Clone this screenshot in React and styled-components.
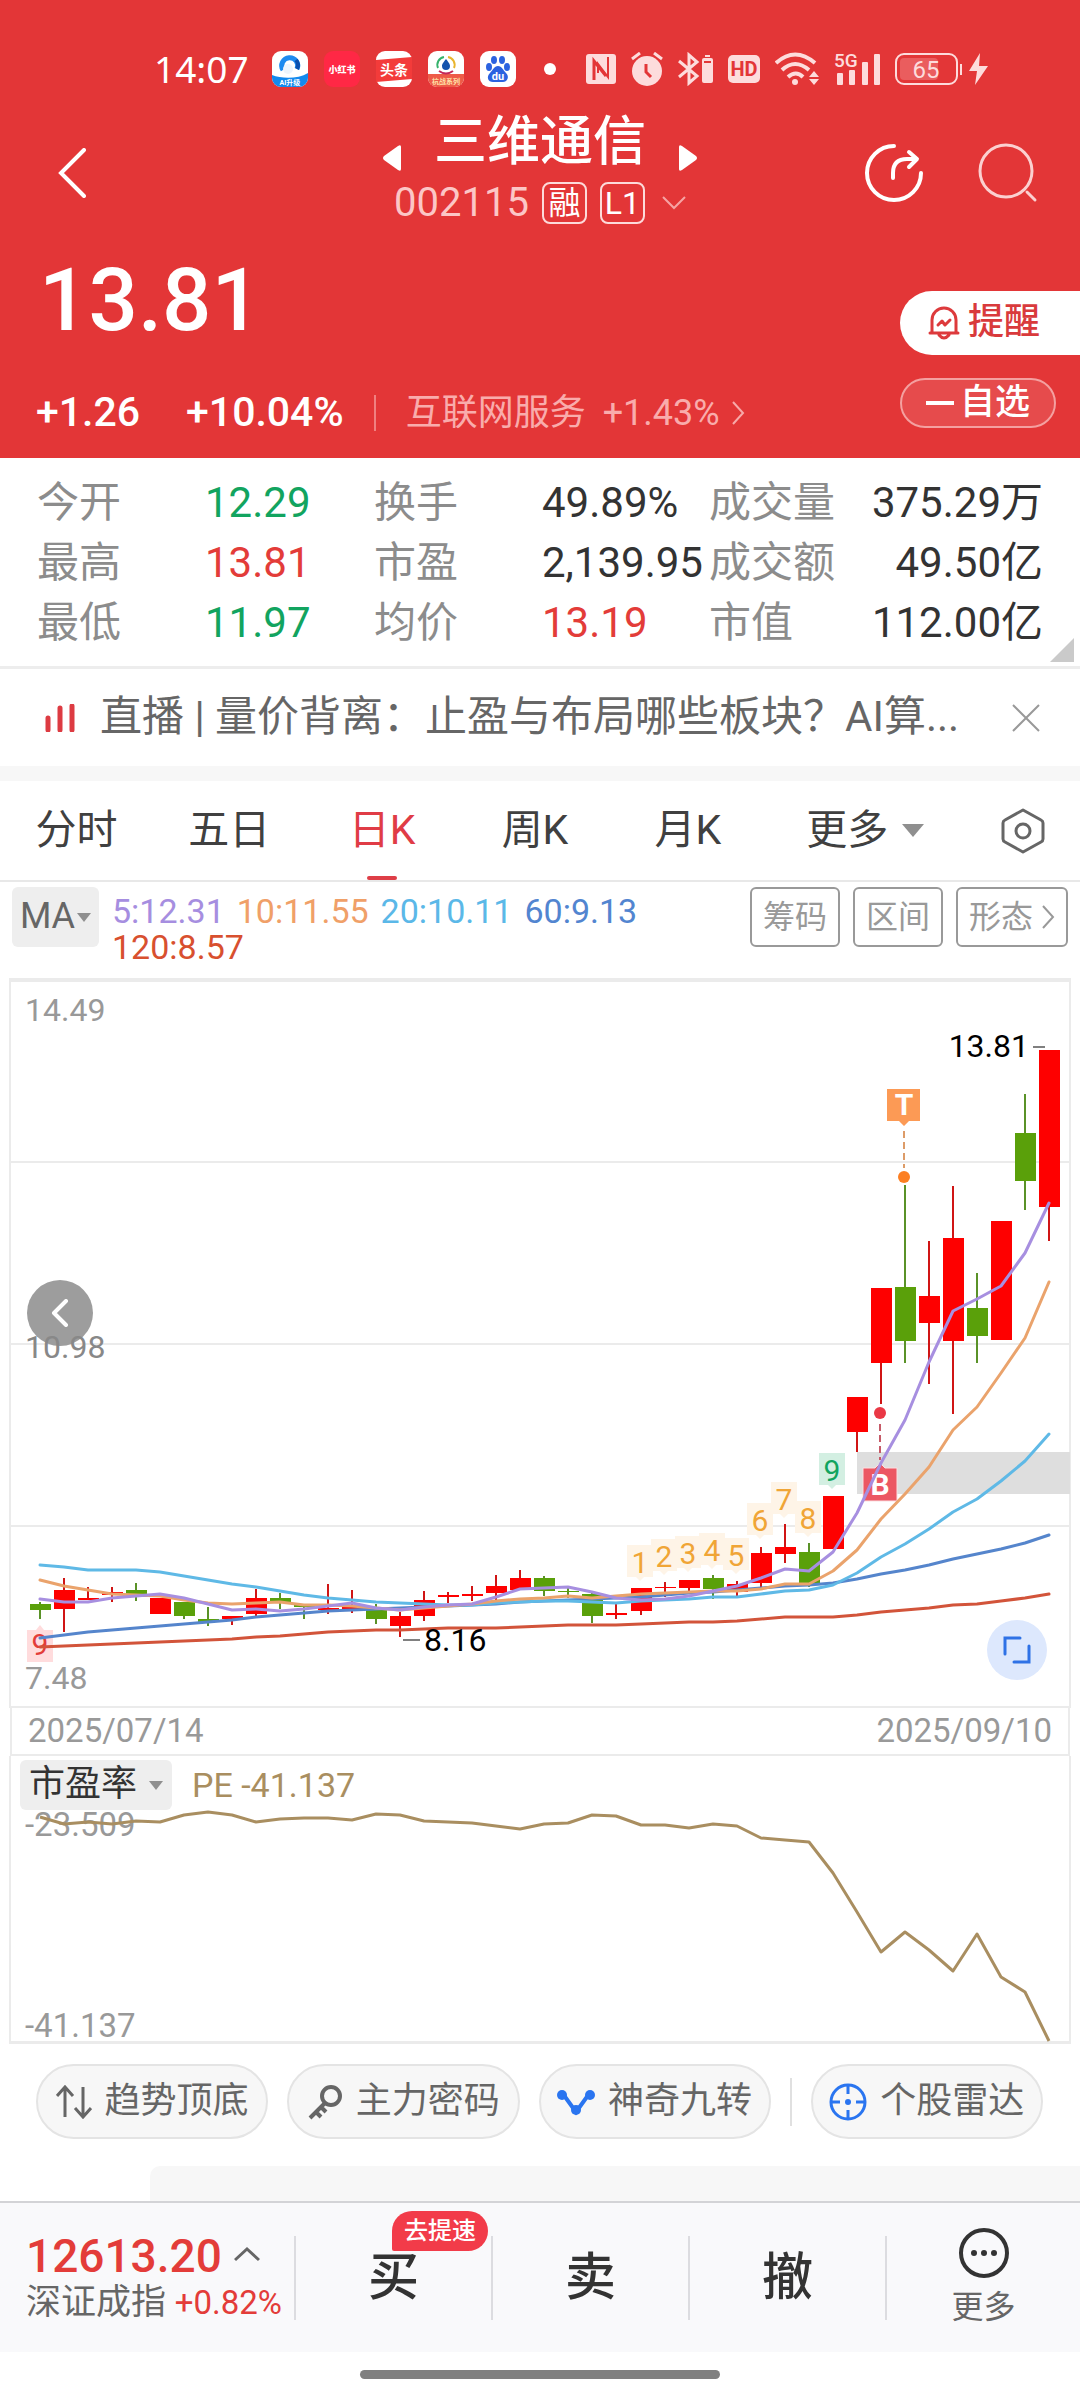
import styled, { createGlobalStyle } from 'styled-components';

const RED = '#e33637';
const UP = '#e33c39';
const DOWN = '#12a45f';

const stats = [
  { label: '今开', value: '12.29', color: DOWN },
  { label: '换手', value: '49.89%' },
  { label: '成交量', value: '375.29万', end: true },
  { label: '最高', value: '13.81', color: UP },
  { label: '市盈', value: '2,139.95' },
  { label: '成交额', value: '49.50亿', end: true },
  { label: '最低', value: '11.97', color: DOWN },
  { label: '均价', value: '13.19', color: UP },
  { label: '市值', value: '112.00亿', end: true },
];

const periods = ['分时', '五日', '日K', '周K', '月K'];

const averages = [
  { text: '5:12.31', color: '#a68ee0' },
  { text: '10:11.55', color: '#f0a068' },
  { text: '20:10.11', color: '#5bb8e8' },
  { text: '60:9.13', color: '#5285d0' },
  { text: '120:8.57', color: '#d8502f' },
];

// [up, high, body top, body bottom, low] in chart units
const candles = [
  [0, 1602, 1604, 1610, 1619], [1, 1578, 1590, 1609, 1632], [1, 1587, 1598, 1600, 1600],
  [1, 1587, 1592, 1595, 1602], [0, 1583, 1590, 1597, 1601], [1, 1598, 1598, 1614, 1614],
  [0, 1602, 1602, 1616, 1619], [0, 1607, 1619, 1622, 1626], [1, 1616, 1616, 1619, 1625],
  [1, 1589, 1598, 1614, 1617], [0, 1593, 1598, 1602, 1609], [0, 1605, 1605, 1607, 1619],
  [1, 1584, 1608, 1610, 1614], [1, 1590, 1607, 1609, 1613], [0, 1604, 1610, 1619, 1624],
  [1, 1612, 1616, 1626, 1637], [1, 1591, 1600, 1616, 1621], [1, 1592, 1595, 1597, 1603],
  [1, 1586, 1594, 1596, 1601], [1, 1575, 1586, 1593, 1600], [1, 1570, 1578, 1590, 1590],
  [0, 1576, 1578, 1591, 1596], [0, 1587, 1591, 1592, 1598], [0, 1593, 1594, 1616, 1623],
  [1, 1604, 1613, 1615, 1619], [1, 1588, 1588, 1611, 1615], [1, 1582, 1587, 1588, 1597],
  [1, 1580, 1580, 1588, 1591], [0, 1575, 1578, 1589, 1599], [1, 1581, 1584, 1592, 1598],
  [1, 1547, 1553, 1583, 1590], [1, 1524, 1547, 1554, 1563], [0, 1543, 1552, 1585, 1587],
  [1, 1496, 1496, 1549, 1549], [1, 1397, 1397, 1432, 1452], [1, 1288, 1288, 1363, 1404],
  [0, 1185, 1287, 1341, 1363], [1, 1241, 1296, 1323, 1384], [1, 1186, 1238, 1341, 1414],
  [0, 1273, 1308, 1336, 1363], [1, 1221, 1221, 1340, 1340], [0, 1094, 1133, 1181, 1210],
  [1, 1050, 1050, 1207, 1241],
];

const ma5 = [1599, 1602, 1602, 1598, 1596, 1594, 1598, 1604, 1610, 1609, 1611, 1609, 1606, 1603, 1608, 1610, 1607, 1605, 1604, 1597, 1589, 1588, 1587, 1592, 1598, 1600, 1599, 1596, 1591, 1586, 1578, 1569, 1571, 1552, 1513, 1463, 1420, 1362, 1311, 1299, 1286, 1253, 1203];
const ma10 = [1580, 1586, 1590, 1594, 1595, 1596, 1600, 1603, 1604, 1603, 1602, 1605, 1605, 1606, 1608, 1610, 1608, 1606, 1604, 1601, 1599, 1598, 1596, 1598, 1596, 1594, 1593, 1592, 1591, 1591, 1589, 1584, 1584, 1571, 1550, 1519, 1494, 1467, 1430, 1407, 1373, 1338, 1282];
const ma20 = [1565, 1567, 1570, 1570, 1570, 1572, 1576, 1580, 1584, 1587, 1591, 1595, 1598, 1600, 1602, 1603, 1604, 1605, 1605, 1603, 1602, 1601, 1601, 1602, 1603, 1601, 1600, 1599, 1597, 1597, 1594, 1591, 1590, 1585, 1573, 1557, 1544, 1529, 1512, 1499, 1481, 1461, 1434];
const ma60 = [1638, 1635, 1632, 1630, 1628, 1626, 1624, 1622, 1620, 1617, 1615, 1613, 1611, 1610, 1609, 1608, 1607, 1606, 1605, 1604, 1602, 1601, 1600, 1599, 1598, 1597, 1595, 1593, 1592, 1590, 1588, 1586, 1585, 1583, 1579, 1574, 1570, 1565, 1559, 1554, 1549, 1543, 1535];
const ma120 = [1647, 1646, 1645, 1644, 1643, 1642, 1641, 1640, 1639, 1637, 1636, 1634, 1632, 1631, 1630, 1630, 1629, 1628, 1628, 1628, 1627, 1626, 1625, 1625, 1625, 1624, 1623, 1622, 1622, 1621, 1619, 1617, 1617, 1617, 1615, 1612, 1610, 1608, 1605, 1604, 1601, 1598, 1594];
const pe = [1817, 1824, 1822, 1824, 1821, 1822, 1815, 1812, 1815, 1822, 1819, 1818, 1818, 1820, 1814, 1815, 1821, 1822, 1823, 1826, 1829, 1824, 1823, 1815, 1816, 1825, 1825, 1828, 1824, 1826, 1838, 1840, 1842, 1873, 1912, 1952, 1932, 1950, 1971, 1934, 1977, 1992, 2041];

const nineTurns = [
  { n: 1, i: 25, y: 1545 }, { n: 2, i: 26, y: 1539 }, { n: 3, i: 27, y: 1536 },
  { n: 4, i: 28, y: 1533 }, { n: 5, i: 29, y: 1538 }, { n: 6, i: 30, y: 1503 },
  { n: 7, i: 31, y: 1482 }, { n: 8, i: 32, y: 1501 }, { n: 9, i: 33, y: 1453 },
];

const xAt = (i) => Math.round(40 + i * 24.02);
const toPoints = (list) => list.map((y, i) => `${xAt(i)},${y}`).join(' ');

function AppIcons() {
  return (
    <>
      <Svg width="36" height="36" viewBox="0 0 36 36">
        <rect width="36" height="36" rx="9" fill="#fff" />
        <path d="M0 24C10 28 26 28 36 22V27a9 9 0 0 1-9 9H9a9 9 0 0 1-9-9z" fill="#1389ee" />
        <path d="M11 19a8 8 0 1 1 14-1" fill="none" stroke="#1d8af0" strokeWidth="5" />
        <path d="M24 9a8 8 0 0 1 1 9" fill="none" stroke="#0b4fae" strokeWidth="4" />
        <circle cx="16" cy="18" r="5" fill="#eef5fd" />
        <SvgText x="18" y="34" size="7" anchor="middle" fill="#fff" weight="700">AI升级</SvgText>
      </Svg>
      <Svg width="36" height="36" viewBox="0 0 36 36">
        <rect width="36" height="36" rx="9" fill="#ff2845" />
        <SvgText x="18" y="22" size="9" anchor="middle" fill="#fff" weight="900">小红书</SvgText>
      </Svg>
      <Svg width="36" height="36" viewBox="0 0 36 36">
        <rect width="36" height="36" rx="9" fill="#fff" />
        <path d="M0 9l36-3v22l-36 3z" fill="#f33b3a" />
        <SvgText x="18" y="24" size="14" anchor="middle" fill="#fff" weight="700">头条</SvgText>
      </Svg>
      <Svg width="36" height="36" viewBox="0 0 36 36">
        <rect width="36" height="36" rx="9" fill="#fff" />
        <path d="M0 23h36v4a9 9 0 0 1-9 9H9a9 9 0 0 1-9-9z" fill="#ee5b48" />
        <path d="M10 17a8 8 0 0 1 6-11" stroke="#35b26b" strokeWidth="2" fill="none" />
        <path d="M20 6a8 8 0 0 1 6 11" stroke="#e9b52e" strokeWidth="2" fill="none" />
        <path d="M11 20q7 5 14 0" stroke="#c3285a" strokeWidth="2" fill="none" />
        <path d="M18 8c3 4 4 5 4 7a4 4 0 0 1-8 0c0-2 1-3 4-7z" fill="#1453ad" />
        <SvgText x="18" y="33" size="7" anchor="middle" fill="#ffe2a8" weight="700">杭战系列</SvgText>
      </Svg>
      <Svg width="36" height="36" viewBox="0 0 36 36">
        <rect width="36" height="36" rx="9" fill="#fff" />
        <g fill="#2b62e0">
          <ellipse cx="9" cy="16" rx="3" ry="4" />
          <ellipse cx="14" cy="9" rx="3" ry="4" />
          <ellipse cx="22" cy="9" rx="3" ry="4" />
          <ellipse cx="27" cy="16" rx="3" ry="4" />
          <path d="M18 15c4 0 5 4 8 7 4 4 1 9-3 9H13c-5 0-7-5-3-9 3-3 4-7 8-7z" />
        </g>
        <SvgText x="18" y="29" size="11" anchor="middle" fill="#fff" weight="700">du</SvgText>
      </Svg>
    </>
  );
}

function SystemIcons() {
  const tint = '#fddcdc';
  return (
    <SystemTray>
      <Svg width="30" height="32" viewBox="0 0 30 32">
        <rect y="1" width="30" height="30" rx="3" fill={tint} />
        <path d="M8 27V8l12 15" fill="none" stroke={RED} strokeWidth="3" />
        <path d="M22 4v20L12 11v9" fill="none" stroke={RED} strokeWidth="2" />
      </Svg>
      <Svg width="32" height="34" viewBox="0 0 32 34">
        <circle cx="16" cy="19" r="15" fill={tint} />
        <path d="M1 7l8-6M31 7l-8-6" stroke={tint} strokeWidth="3" />
        <path d="M15 12v8l5 5" fill="none" stroke={RED} strokeWidth="3" />
      </Svg>
      <Svg width="35" height="34" viewBox="0 0 35 34">
        <path d="M1 9l18 15-8 7V3l8 7L1 25" fill="none" stroke={tint} strokeWidth="3" />
        <rect x="24" y="6" width="11" height="25" rx="2" fill={tint} />
        <rect x="27" y="3" width="5" height="2" fill={tint} />
        <path d="M26 10h7" stroke={RED} strokeWidth="2" />
      </Svg>
      <Svg width="32" height="30" viewBox="0 0 32 30">
        <rect width="32" height="28" y="1" rx="5" fill={tint} />
        <SvgText x="16" y="22" size="20" anchor="middle" fill={RED} weight="700">HD</SvgText>
      </Svg>
      <Svg width="44" height="34" viewBox="0 0 44 34">
        <g fill="none" stroke={tint} strokeWidth="4">
          <path d="M1 11Q20-6 40 11" />
          <path d="M7 18Q20 6 34 18" />
          <path d="M13 25q8-7 15 0" />
        </g>
        <circle cx="20" cy="30" r="3" fill={tint} />
        <path d="M34 25l5-6 5 6zM34 27h10l-5 6z" fill={tint} />
      </Svg>
      <Svg width="46" height="46" viewBox="0 -6 46 46">
        <g fill={tint}>
          <rect x="3" y="21" width="6" height="12" rx="1" />
          <rect x="15" y="18" width="6" height="15" rx="1" />
          <rect x="28" y="10" width="6" height="23" rx="1" />
          <rect x="40" y="2" width="6" height="31" rx="1" />
        </g>
        <SvgText x="0" y="15" size="19" fill={tint} weight="500">5G</SvgText>
      </Svg>
      <Svg width="94" height="34" viewBox="0 0 94 34">
        <rect x="1" y="2" width="61" height="30" rx="8" fill="none" stroke={tint} strokeWidth="2" />
        <rect x="5" y="6" width="38" height="22" rx="4" fill="#ea5d5e" />
        <rect x="65" y="12" width="2" height="11" fill={tint} />
        <path d="M85 1L74 19h8l-2 14 13-19h-9z" fill={tint} />
        <SvgText x="31" y="26" size="24" anchor="middle" fill={tint}>65</SvgText>
      </Svg>
    </SystemTray>
  );
}

function KLineChart() {
  return (
    <ChartBox>
      <ChartSvg viewBox="0 978 1080 730">
        <path d="M10 980H1070" stroke="#ebebeb" strokeWidth="4" />
        <path d="M10 1162H1070M10 1344H1070M10 1526H1070M10 1707H1070" stroke="#ebebeb" strokeWidth="2" />
        <path d="M10 978V1708M1070 978V1708" stroke="#ebebeb" strokeWidth="2" />
        <rect x="857" y="1452" width="213" height="42" fill="#dedede" />
        <circle cx="60" cy="1313" r="33" fill="#9d9d9d" />
        <g fill="#999">
          <SvgText x="25" y="1021" size="32">14.49</SvgText>
          <SvgText x="25" y="1358" size="32" fill="#888">10.98</SvgText>
          <SvgText x="25" y="1689" size="32">7.48</SvgText>
        </g>
        {candles.map(([up, high, top, bottom, low], i) => (
          <g key={i} fill={up ? '#fe0000' : '#5aa00a'}>
            <rect x={xAt(i) - 1} y={high} width="2" height={low - high} fill={up ? '#d01515' : '#5a9228'} />
            <rect x={xAt(i) - 10} y={top} width="21" height={bottom - top} />
          </g>
        ))}
        {nineTurns.map(({ n, i, y }) => (
          <g key={n}>
            <path
              d={`M${xAt(i) - 14} ${y}h26v32h-9l-4 4-4-4h-9z`}
              fill={n === 9 ? '#d3efe2' : '#fef4e7'}
            />
            <SvgText x={xAt(i) - 1} y={y + 28} size="30" anchor="middle" fill={n === 9 ? DOWN : '#f0a536'}>{n}</SvgText>
          </g>
        ))}
        <path d="M27 1630h9l4-5 4 5h9v32H27z" fill="#ffdcdd" />
        <SvgText x="40" y="1655" size="30" anchor="middle" fill={UP}>9</SvgText>

        <path d="M904 1131V1168" stroke="#dd9c68" strokeWidth="2" strokeDasharray="7 4" />
        <circle cx="904" cy="1177" r="6" fill="#fc7f22" />
        <path d="M887 1089h33v32h-11l-5 5-5-5h-12z" fill="#fc9a55" />
        <SvgText x="904" y="1115" size="30" anchor="middle" fill="#fff" weight="700">T</SvgText>
        <path d="M880 1424V1460" stroke="#c65a68" strokeWidth="2" strokeDasharray="7 4" />
        <circle cx="880" cy="1413" r="6" fill="#ea3845" />
        <path d="M863 1468h12l5-5 5 5h12v33h-34z" fill="#ec5763" stroke="#fbe0e2" strokeWidth="1" />
        <SvgText x="880" y="1495" size="30" anchor="middle" fill="#fff" weight="700">B</SvgText>

        <g fill="none" strokeWidth="3" strokeLinejoin="round" strokeLinecap="round">
          <polyline points={toPoints(ma120)} stroke="#d2543a" />
          <polyline points={toPoints(ma60)} stroke="#5585cc" />
          <polyline points={toPoints(ma20)} stroke="#5fb9e6" />
          <polyline points={toPoints(ma10)} stroke="#eaa36c" />
          <polyline points={toPoints(ma5)} stroke="#a78fe0" />
        </g>
        <path d="M403 1640h17M1033 1047h12" stroke="#808080" strokeWidth="2" />
        <SvgText x="424" y="1651" size="32" fill="#000">8.16</SvgText>
        <SvgText x="1029" y="1057" size="32" anchor="end" fill="#000">13.81</SvgText>
      </ChartSvg>
      <PrevButton aria-label="prev">
        <Svg width="20" height="28" viewBox="0 0 20 28">
          <path d="M16 2L4 14l12 12" fill="none" stroke="#fff" strokeWidth="4" strokeLinecap="round" strokeLinejoin="round" />
        </Svg>
      </PrevButton>
      <ExpandButton aria-label="expand">
        <Svg width="28" height="28" viewBox="0 0 28 28">
          <path d="M17 2H2v16M26 10v16H11" fill="none" stroke="#2f72e6" strokeWidth="3" strokeLinecap="round" />
        </Svg>
      </ExpandButton>
    </ChartBox>
  );
}

function App() {
  return (
    <Page>
      <GlobalStyle />
      <Header>
        <StatusBar>
          <Clock>14:07</Clock>
          <AppTray><AppIcons /></AppTray>
          <Dot />
          <SystemIcons />
        </StatusBar>
        <NavBar>
          <IconButton aria-label="back">
            <Svg width="44" height="50" viewBox="-14 0 44 50">
              <path d="M28 2L5 25l23 23" fill="none" stroke="#fff" strokeWidth="4" strokeLinecap="round" />
            </Svg>
          </IconButton>
          <TitleBlock>
            <TitleRow>
              <IconButton aria-label="previous stock">
                <Svg width="18" height="28" viewBox="0 0 18 28"><path d="M18 3v22q0 3-3 1L1 16q-2-2 0-4L15 2q3-2 3 1z" fill="#fff" /></Svg>
              </IconButton>
              <Title>三维通信</Title>
              <IconButton aria-label="next stock">
                <Svg width="18" height="28" viewBox="0 0 18 28"><path d="M0 3v22q0 3 3 1l14-10q2-2 0-4L3 2Q0 0 0 3z" fill="#fff" /></Svg>
              </IconButton>
            </TitleRow>
            <CodeRow>
              <Code>002115</Code>
              <Tag>融</Tag>
              <Tag>L1</Tag>
              <Svg width="28" height="14" viewBox="-4 0 28 14">
                <path d="M1 1l11 11L23 1" fill="none" stroke="#f6a3a3" strokeWidth="2" />
              </Svg>
            </CodeRow>
          </TitleBlock>
          <NavActions>
            <IconButton aria-label="share">
              <Svg width="60" height="60" viewBox="0 0 60 60">
                <g fill="none" stroke="#fff" strokeWidth="4" strokeLinecap="round" strokeLinejoin="round">
                  <path d="M30 3A27 27 0 1 0 57 30" />
                  <path d="M29 35v-5q0-14 14-14h9M45 9l8 7-8 8" />
                </g>
              </Svg>
            </IconButton>
            <IconButton aria-label="search">
              <Svg width="60" height="60" viewBox="0 0 60 60">
                <g fill="none" stroke="#fbd0d0" strokeWidth="3" strokeLinecap="round">
                  <circle cx="28" cy="28" r="26" />
                  <path d="M49 49l8 8" />
                </g>
              </Svg>
            </IconButton>
          </NavActions>
        </NavBar>
        <Quote>
          <div>
            <Price>13.81</Price>
            <ChangeRow>
              <Change>+1.26</Change>
              <Change>+10.04%</Change>
              <Sector href="#sector">
                互联网服务 <span>+1.43%</span>
                <Svg width="14" height="24" viewBox="0 0 14 24">
                  <path d="M2 1l10 11L2 23" fill="none" stroke="#f7a9a9" strokeWidth="2" />
                </Svg>
              </Sector>
            </ChangeRow>
          </div>
          <QuoteActions>
            <RemindButton>
              <Svg width="32" height="34" viewBox="0 0 32 34">
                <g fill="none" stroke="#dd3a3c" strokeWidth="3" strokeLinejoin="round" strokeLinecap="round">
                  <path d="M4 26V14a12 12 0 0 1 24 0v12M2 27h28M11 29q5 6 10 0" />
                  <path d="M10 19l4-4 3 4 5-5" />
                </g>
              </Svg>
              提醒
            </RemindButton>
            <WatchButton>
              <Svg width="28" height="4" viewBox="0 0 28 4"><rect width="28" height="4" fill="#fff" /></Svg>
              自选
            </WatchButton>
          </QuoteActions>
        </Quote>
      </Header>

      <Stats>
        {stats.map((item) => (
          <Stat key={item.label}>
            <StatLabel $end={item.end}>{item.label}</StatLabel>
            <StatValue $color={item.color} $end={item.end}>{item.value}</StatValue>
          </Stat>
        ))}
        <Corner />
      </Stats>

      <Banner>
        <Svg width="30" height="28" viewBox="0 0 30 28">
          <path d="M3 14v12M15 4v22M27 2v24" stroke="#dd3b42" strokeWidth="5" strokeLinecap="round" />
        </Svg>
        <BannerText href="#live">直播 | 量价背离：止盈与布局哪些板块？AI算...</BannerText>
        <IconButton aria-label="close">
          <Svg width="28" height="28" viewBox="0 0 28 28">
            <path d="M1 1l26 26M27 1L1 27" stroke="#999" strokeWidth="2" />
          </Svg>
        </IconButton>
      </Banner>

      <Tabs>
        {periods.map((name) => (
          <Tab key={name} $active={name === '日K'}>{name}</Tab>
        ))}
        <Tab>更多<Caret $size={11} /></Tab>
        <Tab aria-label="settings">
          <Svg width="44" height="46" viewBox="0 0 44 46">
            <g fill="none" stroke="#666" strokeWidth="3" strokeLinejoin="round">
              <path d="M22 2l18 10q2 1 2 3v16q0 2-2 3L22 44 4 34q-2-1-2-3V15q0-2 2-3z" />
              <circle cx="22" cy="23" r="7" />
            </g>
          </Svg>
        </Tab>
      </Tabs>

      <MaRow>
        <MaButton>MA<Caret $size={7} /></MaButton>
        <MaList>
          {averages.map((ma) => (
            <MaItem key={ma.text} $color={ma.color}>{ma.text}</MaItem>
          ))}
        </MaList>
        <OutlineButton>筹码</OutlineButton>
        <OutlineButton>区间</OutlineButton>
        <OutlineButton>
          形态
          <Svg width="14" height="24" viewBox="0 0 14 24">
            <path d="M2 1l10 11L2 23" fill="none" stroke="#999" strokeWidth="2" />
          </Svg>
        </OutlineButton>
      </MaRow>

      <KLineChart />
      <DateRow><span>2025/07/14</span><span>2025/09/10</span></DateRow>
      <PePanel>
        <PeHead>
          <PeButton>市盈率<Caret $size={7} /></PeButton>
          <span>PE -41.137</span>
        </PeHead>
        <ChartSvg viewBox="0 1756 1080 288">
          <path d="M10 1756V2044M1070 1756V2044" stroke="#ebebeb" strokeWidth="2" />
          <path d="M10 2043H1070" stroke="#ebebeb" strokeWidth="4" />
          <SvgText x="25" y="1836" size="33" fill="#999">-23.509</SvgText>
          <SvgText x="25" y="2037" size="33" fill="#999">-41.137</SvgText>
          <polyline points={toPoints(pe)} fill="none" stroke="#a98e60" strokeWidth="3" strokeLinejoin="round" />
        </ChartSvg>
      </PePanel>

      <Tools>
        <Pill>
          <Svg width="36" height="36" viewBox="0 0 36 36">
            <path d="M9 33V4M1 12l8-9 8 9M27 3v29M19 24l8 9 8-9" fill="none" stroke="#666" strokeWidth="3" />
          </Svg>
          趋势顶底
        </Pill>
        <Pill>
          <Svg width="36" height="36" viewBox="0 0 36 36">
            <g fill="none" stroke="#666" strokeWidth="4">
              <circle cx="24" cy="12" r="9" />
              <path d="M18 19L3 34M9 28l5 5M14 23l5 5" />
            </g>
          </Svg>
          主力密码
        </Pill>
        <Pill>
          <Svg width="38" height="36" viewBox="0 0 38 36">
            <path d="M6 10l13 18L32 10" fill="none" stroke="#2a75f0" strokeWidth="4" />
            <g fill="#2a75f0"><circle cx="5" cy="11" r="5" /><circle cx="33" cy="11" r="5" /><circle cx="19" cy="26" r="5" /></g>
          </Svg>
          神奇九转
        </Pill>
        <ToolDivider />
        <Pill>
          <Svg width="38" height="38" viewBox="0 0 38 38">
            <g fill="none" stroke="#2a75f0" strokeWidth="3">
              <circle cx="19" cy="19" r="17" />
              <path d="M19 2v9M19 27v9M2 19h9M27 19h9" />
            </g>
            <circle cx="19" cy="19" r="3" fill="#2a75f0" />
          </Svg>
          个股雷达
        </Pill>
      </Tools>
      <NextCard />

      <TradeBar>
        <IndexButton>
          <IndexValue>
            12613.20
            <Svg width="26" height="24" viewBox="0 0 26 24">
              <path d="M1 16L13 5l12 11" fill="none" stroke="#666" strokeWidth="3" />
            </Svg>
          </IndexValue>
          <IndexName>深证成指 <b>+0.82%</b></IndexName>
        </IndexButton>
        <TradeButton>买<Badge>去提速</Badge></TradeButton>
        <TradeButton>卖</TradeButton>
        <TradeButton>撤</TradeButton>
        <MoreButton>
          <Svg width="52" height="52" viewBox="0 0 52 52">
            <circle cx="26" cy="26" r="23" fill="none" stroke="#333" strokeWidth="4" />
            <g fill="#333"><circle cx="16" cy="26" r="3" /><circle cx="26" cy="26" r="3" /><circle cx="36" cy="26" r="3" /></g>
          </Svg>
          更多
        </MoreButton>
      </TradeBar>
      <HomeArea><HomeBar /></HomeArea>
    </Page>
  );
}

export default App;

const GlobalStyle = createGlobalStyle`
  * { box-sizing: border-box; }
  body {
    margin: 0;
    background: #fff;
  }
  button {
    font: inherit;
    color: inherit;
    background: none;
    border: 0;
    padding: 0;
    margin: 0;
    cursor: pointer;
  }
  a { color: inherit; text-decoration: none; }
  h1, p, dl, dt, dd { margin: 0; font-weight: inherit; }
`;
const Page = styled.div`
  font-family: Roboto, 'Noto Sans CJK SC', sans-serif;
  line-height: 1.2;
  color: #333;
  white-space: nowrap;
`;
const Svg = styled.svg`
  display: block;
  flex: none;
`;
const SvgText = styled.text`
  font-size: ${(p) => p.size}px;
  font-weight: ${(p) => p.weight || 400};
  text-anchor: ${(p) => p.anchor || 'start'};
`;
const Header = styled.header`
  background: ${RED};
  color: #fff;
`;
const StatusBar = styled.div`
  display: flex;
  align-items: center;
  height: 112px;
  padding: 26px 0 0 154px;
`;
const Clock = styled.span`
  font-family: 'Noto Sans', sans-serif;
  font-size: 37px;
  width: 118px;
`;
const AppTray = styled.div`
  display: flex;
  gap: 16px;
`;
const Dot = styled.i`
  width: 12px;
  height: 12px;
  border-radius: 50%;
  background: #fff;
  margin: 0 30px 0 28px;
`;
const SystemTray = styled.div`
  display: flex;
  align-items: center;
  gap: 15px;
`;
const NavBar = styled.nav`
  display: grid;
  grid-template-columns: 1fr auto 1fr;
  align-items: center;
  height: 122px;
  padding: 0 42px;
`;
const IconButton = styled.button`
  display: flex;
  align-items: center;
  justify-self: start;
`;
const TitleBlock = styled.div`
  align-self: start;
  display: flex;
  flex-direction: column;
  align-items: center;
  gap: 10px;
`;
const TitleRow = styled.div`
  display: flex;
  align-items: flex-end;
  gap: 33px;
`;
const Title = styled.h1`
  font-size: 53px;
  line-height: 60px;
  font-weight: 500;
`;
const CodeRow = styled.div`
  display: flex;
  align-items: center;
  gap: 13px;
  color: #ffdada;
`;
const Code = styled.span`
  font-size: 40px;
  line-height: 42px;
  color: #fcc6c6;
`;
const Tag = styled.span`
  width: 45px;
  height: 42px;
  border: 2px solid #fddada;
  border-radius: 8px;
  font-size: 32px;
  line-height: 38px;
  text-align: center;
  color: #fff;
`;
const NavActions = styled.div`
  justify-self: end;
  display: flex;
  gap: 54px;
`;
const Quote = styled.section`
  display: flex;
  justify-content: space-between;
  height: 224px;
`;
const Price = styled.p`
  padding-left: 39px;
  margin-top: 16px;
  font-size: 87px;
  line-height: 100px;
  font-weight: 500;
`;
const ChangeRow = styled.div`
  display: flex;
  align-items: center;
  gap: 46px;
  height: 50px;
  margin-top: 38px;
  padding-left: 36px;
`;
const Change = styled.span`
  font-size: 41px;
  font-weight: 500;
`;
const Sector = styled.a`
  display: flex;
  align-items: center;
  gap: 11px;
  margin-left: -16px;
  padding-left: 30px;
  font-size: 36px;
  line-height: 36px;
  color: #f9acac;
  border-left: 2px solid #f08080;
  span { margin-left: 6px; }
`;
const QuoteActions = styled.div`
  display: flex;
  flex-direction: column;
  gap: 23px;
  padding-top: 57px;
`;
const RemindButton = styled.button`
  display: flex;
  align-items: center;
  gap: 8px;
  width: 180px;
  height: 64px;
  padding-left: 28px;
  border-radius: 32px 0 0 32px;
  background: #fff;
  color: #d93a3c;
  font-size: 36px;
  font-weight: 500;
`;
const WatchButton = styled.button`
  display: flex;
  align-items: center;
  justify-content: center;
  gap: 6px;
  width: 156px;
  height: 50px;
  border: 2px solid #f4a0a0;
  border-radius: 25px;
  background: #e64b4c;
  font-size: 35px;
  font-weight: 500;
`;
const Stats = styled.dl`
  position: relative;
  display: grid;
  grid-template-columns: minmax(0, 337fr) minmax(0, 335fr) minmax(0, 334fr);
  grid-auto-rows: 60px;
  padding: 15px 37px 13px;
  border-bottom: 3px solid #ededed;
  font-size: 42px;
`;
const Stat = styled.div`
  display: flex;
  align-items: center;
`;
const StatLabel = styled.dt`
  color: #8c8c8c;
  min-width: ${(p) => (p.$end ? 126 : 168)}px;
`;
const StatValue = styled.dd`
  color: ${(p) => p.$color || '#333'};
  ${(p) => p.$end && 'flex: 1; text-align: right;'}
`;
const Corner = styled.i`
  position: absolute;
  right: 6px;
  bottom: 4px;
  border-left: 24px solid transparent;
  border-bottom: 24px solid #cacaca;
`;
const Banner = styled.section`
  display: flex;
  align-items: center;
  height: 112px;
  padding: 0 40px 0 45px;
  border-bottom: 15px solid #f7f7f7;
`;
const BannerText = styled.a`
  flex: 1;
  min-width: 0;
  overflow: hidden;
  padding-left: 25px;
  font-size: 42px;
  color: #666;
`;
const Tabs = styled.nav`
  display: grid;
  grid-template-columns: repeat(5, 153fr) 202fr 114fr;
  height: 101px;
  border-bottom: 2px solid #e8e8e8;
`;
const Tab = styled.button`
  position: relative;
  display: flex;
  align-items: center;
  justify-content: center;
  gap: 14px;
  font-size: 41px;
  color: ${(p) => (p.$active ? '#e03c46' : '#404040')};
  &::after {
    content: '';
    display: ${(p) => (p.$active ? 'block' : 'none')};
    position: absolute;
    bottom: 0;
    width: 30px;
    height: 4px;
    border-radius: 2px;
    background: #de3e47;
  }
`;
const Caret = styled.i`
  border: ${(p) => p.$size}px solid transparent;
  border-top: ${(p) => p.$size + 2}px solid #8f8f8f;
  border-bottom: 0;
`;
const MaRow = styled.div`
  display: flex;
  gap: 13px;
  height: 96px;
  padding: 5px 12px 0;
`;
const MaButton = styled.button`
  display: flex;
  align-items: center;
  justify-content: center;
  gap: 2px;
  width: 87px;
  height: 60px;
  border-radius: 6px;
  background: #eee;
  color: #666;
  font-size: 36px;
`;
const MaList = styled.div`
  flex: 1;
  display: flex;
  flex-wrap: wrap;
  align-content: flex-start;
  column-gap: 12px;
  padding-top: 6px;
`;
const MaItem = styled.span`
  font-size: 34px;
  line-height: 36px;
  color: ${(p) => p.$color};
`;
const OutlineButton = styled.button`
  display: flex;
  align-items: center;
  gap: 8px;
  height: 60px;
  padding: 0 11px;
  border: 2px solid #999;
  border-radius: 6px;
  color: #999;
  font-size: 32px;
`;
const ChartBox = styled.div`
  position: relative;
`;
const ChartSvg = styled.svg`
  display: block;
  width: 100%;
  height: auto;
`;
const RoundButton = styled.button`
  position: absolute;
  display: flex;
  align-items: center;
  justify-content: center;
  border-radius: 50%;
`;
const PrevButton = styled(RoundButton)`
  left: 27px;
  top: 302px;
  width: 66px;
  height: 66px;
`;
const ExpandButton = styled(RoundButton)`
  right: 33px;
  bottom: 28px;
  width: 60px;
  height: 60px;
  background: #dde8fd;
`;
const DateRow = styled.div`
  display: flex;
  align-items: center;
  justify-content: space-between;
  height: 48px;
  margin: 0 10px;
  padding: 0 16px;
  border: 2px solid #ebebeb;
  border-top: 0;
  color: #999;
  font-size: 33px;
`;
const PePanel = styled.section`
  position: relative;
`;
const PeHead = styled.div`
  position: absolute;
  top: 4px;
  left: 20px;
  display: flex;
  align-items: center;
  gap: 20px;
  font-size: 34px;
  color: #a98e60;
`;
const PeButton = styled.button`
  display: flex;
  align-items: center;
  justify-content: center;
  gap: 12px;
  width: 152px;
  height: 50px;
  border-radius: 6px;
  background: #eee;
  color: #333;
  font-size: 36px;
`;
const Tools = styled.div`
  display: flex;
  align-items: center;
  gap: 19px;
  padding: 20px 37px 27px 36px;
`;
const Pill = styled.button`
  flex: 1;
  display: flex;
  align-items: center;
  justify-content: center;
  gap: 13px;
  height: 75px;
  border: 2px solid #e4e4e4;
  border-radius: 38px;
  background: #f7f7f7;
  color: #666;
  font-size: 36px;
`;
const ToolDivider = styled.i`
  width: 2px;
  height: 48px;
  background: #e0e0e0;
`;
const NextCard = styled.div`
  height: 35px;
  margin-left: 150px;
  border-radius: 10px 0 0 0;
  background: #f7f7f7;
`;
const TradeBar = styled.footer`
  display: grid;
  grid-template-columns: 294fr 197fr 197fr 197fr 195fr;
  align-items: center;
  height: 151px;
  border-top: 2px solid #d3d3d6;
  background: #f9f9fb;
`;
const IndexButton = styled.button`
  padding-left: 26px;
  text-align: left;
`;
const IndexValue = styled.div`
  display: flex;
  align-items: center;
  gap: 12px;
  font-size: 46px;
  line-height: 50px;
  font-weight: 500;
  color: ${UP};
`;
const IndexName = styled.div`
  font-size: 35px;
  line-height: 44px;
  color: #666;
  b {
    font-size: 33px;
    font-weight: 400;
    color: ${UP};
  }
`;
const TradeButton = styled.button`
  position: relative;
  height: 84px;
  border-left: 2px solid #dcdce0;
  font-size: 51px;
  font-weight: 500;
`;
const Badge = styled.span`
  position: absolute;
  left: 96px;
  top: -25px;
  width: 96px;
  height: 40px;
  border-radius: 20px 20px 20px 2px;
  background: #f23b49;
  color: #fff;
  font-size: 24px;
  line-height: 40px;
  text-align: center;
`;
const MoreButton = styled.button`
  display: flex;
  flex-direction: column;
  align-items: center;
  justify-content: center;
  gap: 6px;
  height: 84px;
  border-left: 2px solid #dcdce0;
  font-size: 32px;
  line-height: 44px;
  color: #666;
`;
const HomeArea = styled.div`
  display: flex;
  justify-content: center;
  padding: 18px 0 21px;
`;
const HomeBar = styled.i`
  width: calc(100% / 3);
  height: 9px;
  border-radius: 5px;
  background: #808080;
`;
